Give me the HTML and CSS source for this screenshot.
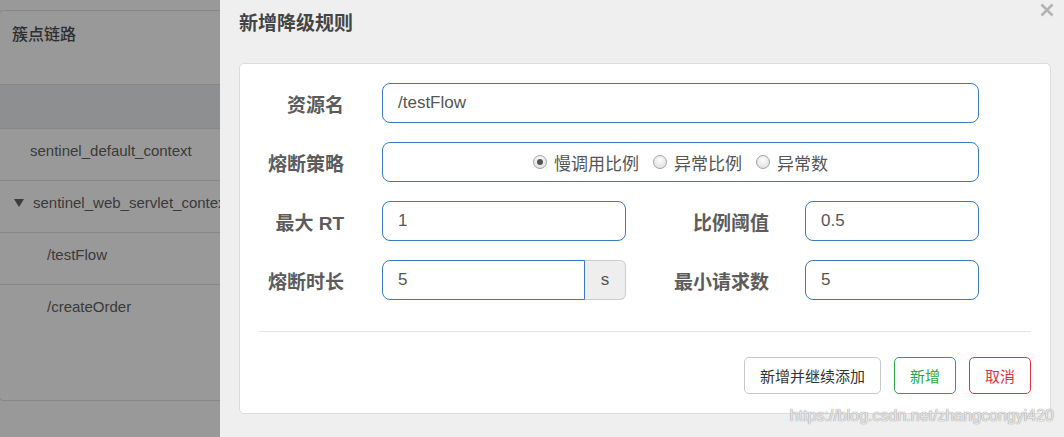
FILE: index.html
```html
<!DOCTYPE html>
<html lang="zh-CN">

<head>
    <meta charset="UTF-8">
    <title>新增降级规则</title>
    <link rel="stylesheet" href="styles.css">
</head>

<body>
    <div class="page">

        <!-- page behind the modal (dimmed) -->
        <aside class="side">
            <div class="side_panel">
                <div class="side_title">簇点链路</div>
                <div class="side_head"></div>
                <div class="side_row lvl1">sentinel_default_context</div>
                <div class="side_row lvl1 open"><span class="caret"></span>sentinel_web_servlet_context</div>
                <div class="side_row lvl2">/testFlow</div>
                <div class="side_row lvl2 last">/createOrder</div>
            </div>
        </aside>

        <!-- modal -->
        <section class="dialog">
            <div class="dialog_head">
                <h3>新增降级规则</h3>
                <span class="close">
                    <svg width="14" height="14" viewBox="0 0 14 14">
                        <path d="M1.5 1.5 L12.5 12.5 M12.5 1.5 L1.5 12.5" stroke="#b3b3b3" stroke-width="2.6" />
                    </svg>
                </span>
            </div>

            <div class="card">
                <form class="rule_form">
                    <label class="lbl">资源名</label>
                    <input class="field wide" type="text" value="/testFlow">

                    <label class="lbl">熔断策略</label>
                    <div class="field wide radios">
                        <span class="radio checked"></span><span class="radio_txt">慢调用比例</span>
                        <span class="radio"></span><span class="radio_txt">异常比例</span>
                        <span class="radio"></span><span class="radio_txt">异常数</span>
                    </div>

                    <label class="lbl">最大 RT</label>
                    <input class="field" type="text" value="1">
                    <label class="lbl lbl_r">比例阈值</label>
                    <input class="field" type="text" value="0.5">

                    <label class="lbl">熔断时长</label>
                    <div class="input_group">
                        <input class="field grouped" type="text" value="5">
                        <span class="addon">s</span>
                    </div>
                    <label class="lbl lbl_r">最小请求数</label>
                    <input class="field" type="text" value="5">
                </form>

                <hr class="divider">

                <div class="actions">
                    <button class="btn">新增并继续添加</button>
                    <button class="btn btn_ok">新增</button>
                    <button class="btn btn_cancel">取消</button>
                </div>
            </div>

            <div class="watermark">https://blog.csdn.net/zhangcongyi420</div>
        </section>

    </div>
</body>

</html>
```

FILE: styles.css
```css
* {
    margin: 0;
    padding: 0;
    box-sizing: border-box;
}

body {
    font-family: 'Liberation Sans', 'Noto Sans CJK SC', sans-serif;
    overflow: hidden;
}

.page {
    display: flex;
    height: 437px;
}

/* ---------- dimmed page on the left ---------- */

.side {
    width: 220px;
    flex-shrink: 0;
    overflow: hidden;
    background: #999999;
    color: #3a3a3a;
    font-size: 15px;
}

.side_panel {
    width: 260px;
    height: 391px;
    margin: 10px 0 0 -1px;
    border: 1px solid #878787;
    border-radius: 4px;
}

.side_title {
    height: 74px;
    padding: 13px 0 0 12px;
    line-height: 22px;
    font-size: 16px;
    font-weight: 500;
    color: #2e2e2e;
    border-bottom: 1px solid #878787;
}

.side_head {
    height: 44px;
    background: #8e8f91;
    border-bottom: 1px solid #878787;
}

.side_row {
    height: 52px;
    padding-top: 11px;
    line-height: 22px;
    white-space: nowrap;
    border-bottom: 1px solid #878787;
}

.side_row.last {
    border-bottom: 0;
}

.lvl1 {
    padding-left: 30px;
}

.lvl1.open {
    padding-left: 14px;
}

.lvl2 {
    padding-left: 47px;
}

.caret {
    display: inline-block;
    width: 0;
    height: 0;
    margin-right: 9px;
    vertical-align: 1px;
    border-left: 5px solid transparent;
    border-right: 5px solid transparent;
    border-top: 8px solid #3c3c3c;
}

/* ---------- modal ---------- */

.dialog {
    flex: 1;
    position: relative;
    background: #efefef;
    padding: 0 13px 0 19px;
}

.dialog_head {
    height: 63px;
    padding-top: 12px;
}

.dialog_head h3 {
    font-size: 19px;
    line-height: 24px;
    font-weight: bold;
    color: #444;
}

.close {
    position: absolute;
    top: 3px;
    right: 10px;
    width: 14px;
    height: 14px;
}

.card {
    background: #fff;
    border: 1px solid #dcdcdc;
    border-radius: 5px;
    padding: 19px;
}

.rule_form {
    display: grid;
    grid-template-columns: 123px 244px 179px 174px;
    grid-auto-rows: 40px;
    row-gap: 19px;
}

.lbl {
    display: flex;
    align-items: center;
    justify-content: flex-end;
    padding-right: 38px;
    font-size: 19px;
    font-weight: bold;
    color: #5c5c5c;
    white-space: nowrap;
}

.lbl_r {
    padding-right: 36px;
}

.field {
    height: 40px;
    width: 100%;
    padding: 0 15px;
    font-family: inherit;
    font-size: 17px;
    color: #555;
    background: #fff;
    border: 1px solid #3a7abd;
    border-radius: 8px;
    outline: 0;
}

.wide {
    grid-column: 2 / 5;
}

.radios {
    display: flex;
    align-items: center;
    justify-content: center;
    color: #555;
}

.radio {
    width: 14px;
    height: 14px;
    border-radius: 50%;
    border: 1px solid #a3a3a3;
    background: radial-gradient(circle at 50% 35%, #fdfdfd, #d9d9d9);
    margin-right: 7px;
    display: flex;
    align-items: center;
    justify-content: center;
}

.radio.checked::after {
    content: '';
    width: 6px;
    height: 6px;
    border-radius: 50%;
    background: #555;
}

.radio_txt {
    margin-right: 14px;
}

.radio_txt:last-child {
    margin-right: 0;
}

.input_group {
    display: flex;
}

.grouped {
    flex: 1;
    border-radius: 8px 0 0 8px;
}

.addon {
    width: 41px;
    display: flex;
    align-items: center;
    justify-content: center;
    font-size: 17px;
    color: #555;
    background: #eee;
    border: 1px solid #ccc;
    border-left: 0;
    border-radius: 0 6px 6px 0;
}

.divider {
    margin-top: 31px;
    border: 0;
    border-top: 1px solid #e3e3e3;
}

.actions {
    display: flex;
    justify-content: flex-end;
    gap: 13px;
    margin-top: 25px;
}

.btn {
    height: 37px;
    padding: 0 15px;
    font-family: inherit;
    font-size: 15px;
    color: #333;
    background: #fff;
    border: 1px solid #c8c8c8;
    border-radius: 5px;
}

.btn_ok {
    color: #28a745;
    border-color: #28a745;
}

.btn_cancel {
    color: #dc3545;
    border-color: #dc3545;
}

.watermark {
    position: absolute;
    right: 10px;
    bottom: 11px;
    font-size: 16px;
    line-height: 20px;
    color: rgba(255, 255, 255, 0.75);
    text-shadow: 0 0 1px #9a9a9a, 0 0 1px #9a9a9a;
}
```
